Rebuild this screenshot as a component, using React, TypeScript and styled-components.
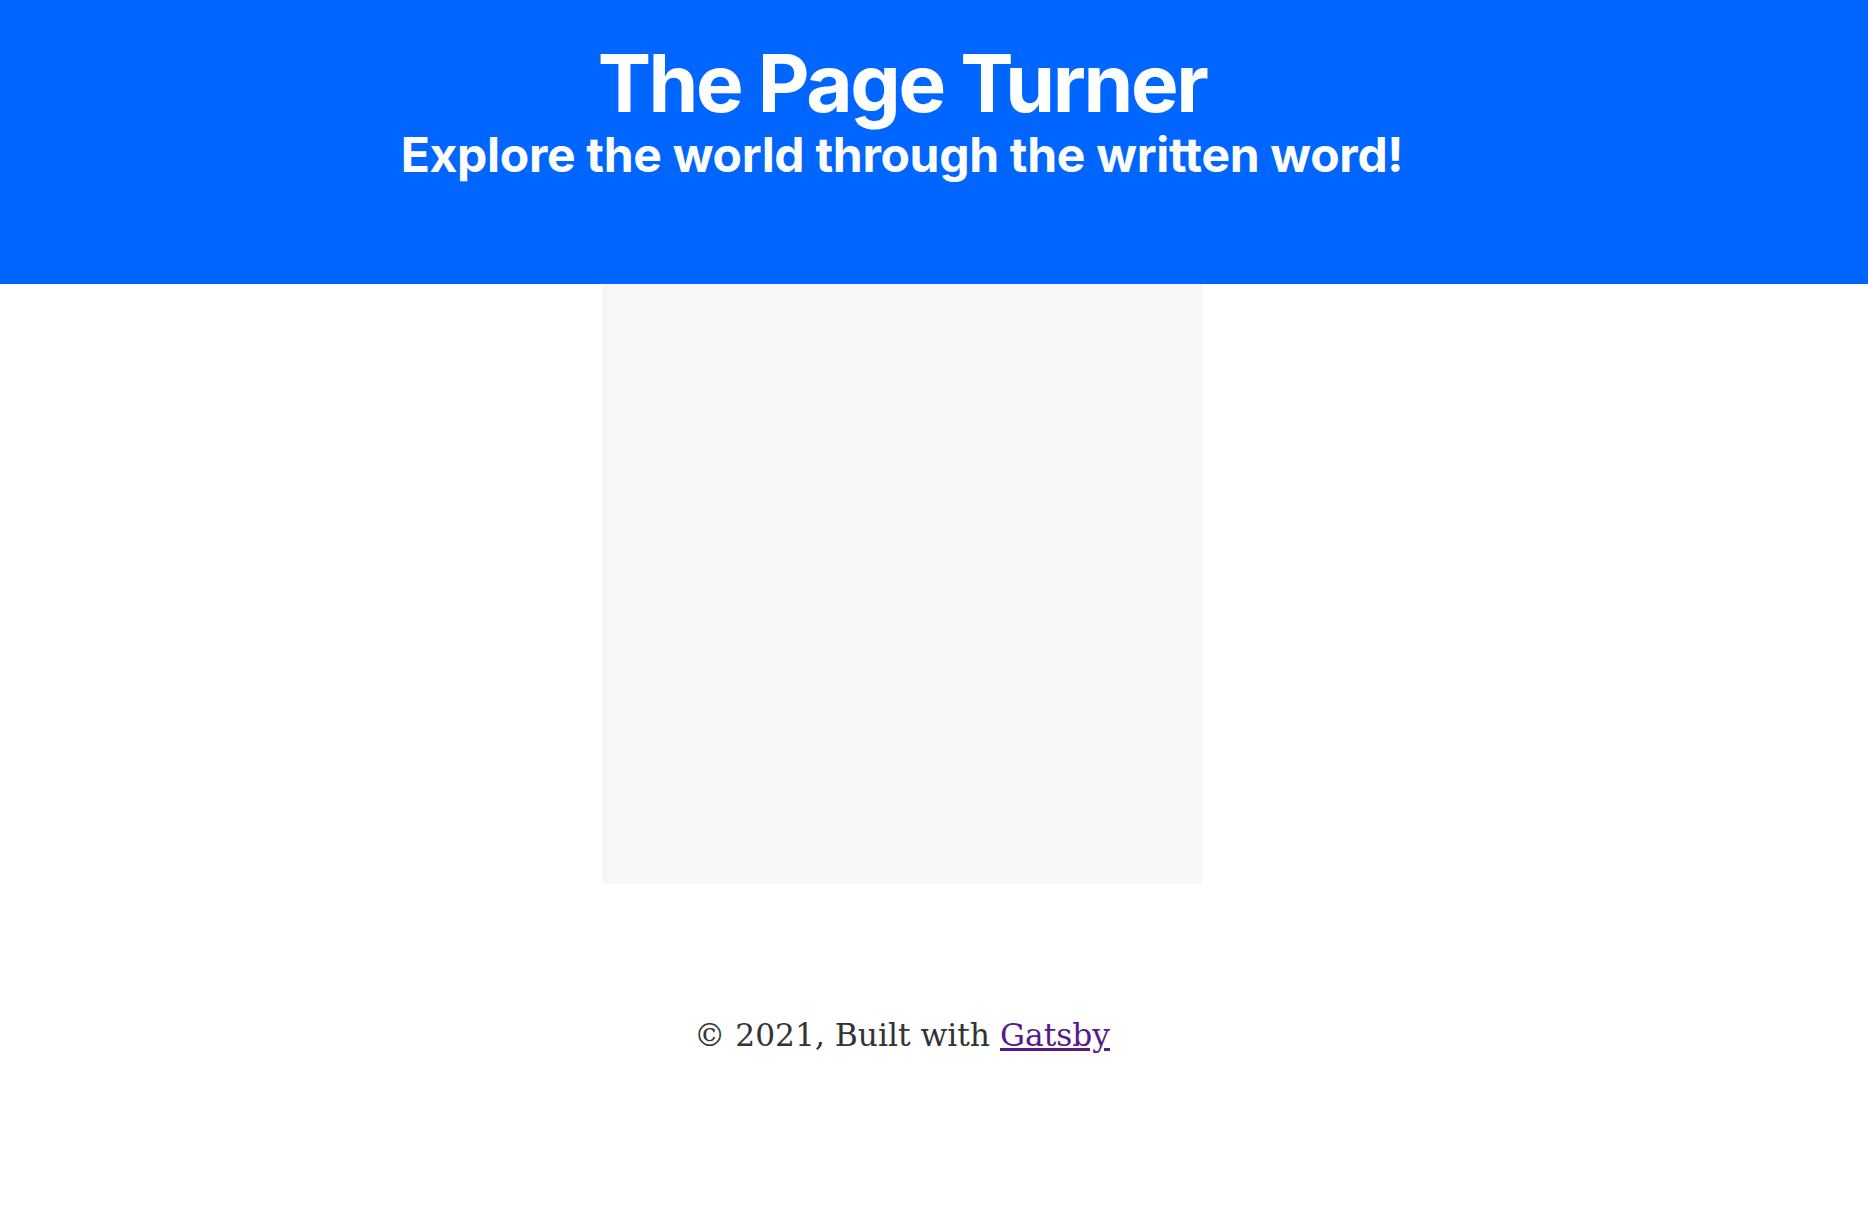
import styled, { createGlobalStyle } from "styled-components";

const GlobalStyle = createGlobalStyle`
  html, body {
    margin: 0;
    padding: 0;
    background: #ffffff;
  }
  body {
    font-family: "DejaVu Serif", "Liberation Serif", serif;
    color: #333333;
  }
`;

const Header = styled.header`
  background-color: #0066ff;
  color: #ffffff;
  display: flex;
  flex-direction: column;
  align-items: center;
  gap: 8px;
  height: 284px;
  box-sizing: border-box;
  padding: 43px 64px 0 0;
  font-family: Inter, "Noto Sans", sans-serif;
  font-weight: 700;
`;

const Title = styled.h1`
  margin: 0;
  font-size: 80px;
  line-height: 1;
  font-weight: 700;
  letter-spacing: -2.4px;
`;

const Subtitle = styled.h2`
  margin: 0;
  font-size: 48px;
  line-height: 1;
  font-weight: 700;
  letter-spacing: -0.3px;
`;

const Main = styled.main`
  display: flex;
  justify-content: center;
  padding-right: 64px;
`;

const Cover = styled.div`
  width: 600px;
  height: 600px;
  background-color: #f7f7f7;
`;

const Footer = styled.footer`
  display: flex;
  justify-content: center;
  padding-right: 64px;
  margin-top: 128px;
  font-size: 31.3px;
  line-height: 1.5;
  color: #333333;
`;

const Link = styled.a`
  color: #551a8b;
  text-decoration: underline;
`;

export default function App() {
  return (
    <>
      <GlobalStyle />
      <Header>
        <Title>The Page Turner</Title>
        <Subtitle>Explore the world through the written word!</Subtitle>
      </Header>
      <Main>
        <Cover />
      </Main>
      <Footer>
        <span>
          © 2021, Built with <Link href="#">Gatsby</Link>
        </span>
      </Footer>
    </>
  );
}
